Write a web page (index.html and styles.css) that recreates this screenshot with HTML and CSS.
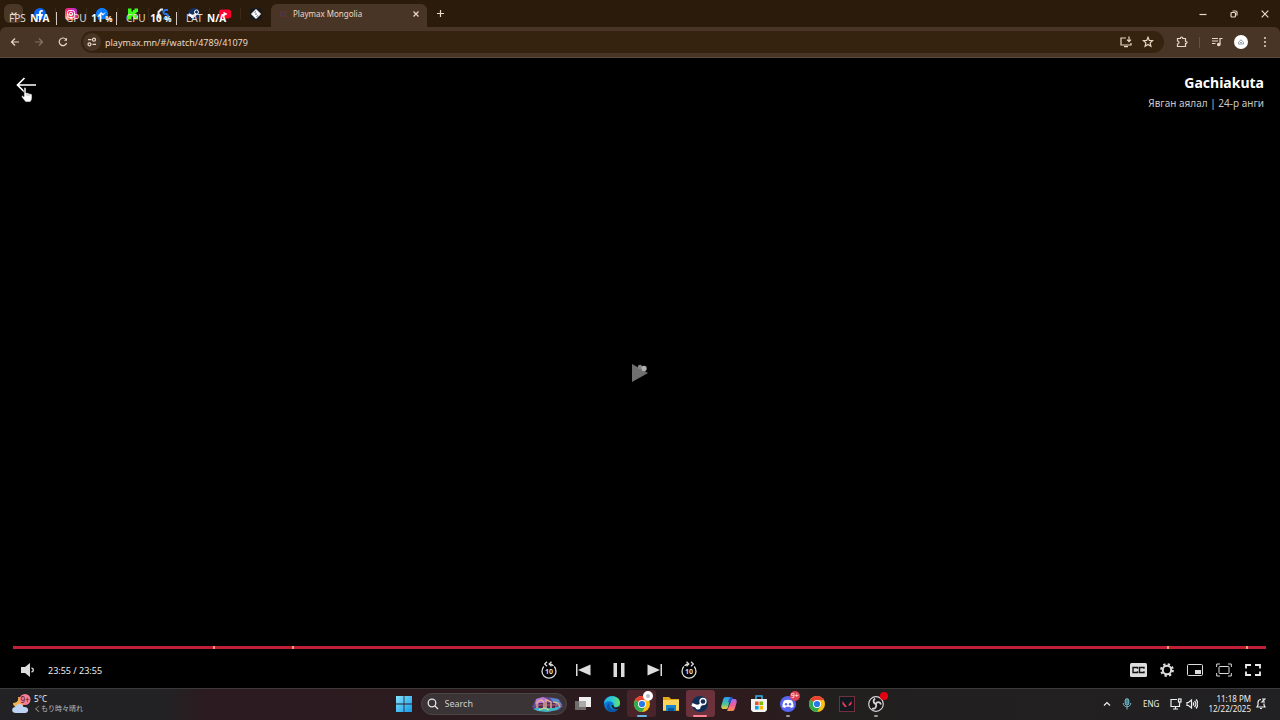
FILE: index.html
```html
<!DOCTYPE html>
<html lang="mn">
<head>
    <meta charset="UTF-8">
    <meta name="viewport" content="width=device-width, initial-scale=1.0">
    <title>Playmax Mongolia</title>
    <link rel="stylesheet" href="styles.css">
</head>
<body>
    <header class="browser">
        <div class="tab-strip">
            <button class="tab-search" aria-label="Search tabs">
                <svg width="8" height="8" viewBox="0 0 8 8" class="line"><path d="M1.500 2.500L4 5l2.500-2.500"/></svg>
            </button>
            <div class="pinned">
                <button class="pin" aria-label="Facebook">
                    <svg width="12" height="12" viewBox="0 0 24 24"><circle cx="12" cy="12" r="12" fill="#0866ff"/><path d="M10 24v-8H7v-4h3v-2c0-4 2-6 5.500-6l2 .2v3.500H16c-1.500 0-2 .8-2 2V12h3.600l-.7 4H14v8z" fill="#fff"/></svg>
                </button>
                <button class="pin" aria-label="Instagram">
                    <svg width="12" height="12" viewBox="0 0 24 24"><defs><linearGradient id="insta" x1="0" y1="1" x2="1" y2="0"><stop offset="0" stop-color="#ffc53d"/><stop offset=".45" stop-color="#ff2870"/><stop offset="1" stop-color="#a52be8"/></linearGradient></defs><rect width="24" height="24" rx="6" fill="url(#insta)"/><rect x="5" y="5" width="14" height="14" rx="4" fill="none" stroke="#fff" stroke-width="2"/><circle cx="12" cy="12" r="3.500" fill="none" stroke="#fff" stroke-width="2"/></svg>
                </button>
                <button class="pin" aria-label="Messenger">
                    <svg width="12" height="12" viewBox="0 0 24 24"><path d="M12 0C5 0 0 5 0 11.500 0 15 1.500 18 4 20v4l4-2 4 .7c7 0 12-4.700 12-11.200S19 0 12 0z" fill="#0a7cff"/><path d="M4 15l6-7 4 3.500L20 8l-6 7-4-3.500z" fill="#fff"/></svg>
                </button>
                <button class="pin" aria-label="Kick">
                    <svg width="12" height="12" viewBox="0 0 24 24"><path d="M2 1h7v6h3V4h3V1h7v7h-3v3h-3v2h3v3h3v7h-7v-3h-3v-3H9v6H2z" fill="#3cff16"/></svg>
                </button>
                <button class="pin" aria-label="Bookmark">
                    <svg width="12" height="12" viewBox="0 0 24 24" fill="none" stroke-width="4"><path d="M12 3H8L3 8v9l4 4" stroke="#e9edf5"/><path d="M22 4h-6l-3 3v3l3 2h3l3 3v3l-3 3h-7" stroke="#2875e7"/></svg>
                </button>
                <button class="pin" aria-label="Steam">
                    <svg width="12" height="12" viewBox="0 0 24 24"><circle cx="12" cy="12" r="12" fill="#123064"/><path d="M1 13l9 4 7-6" stroke="#fff" stroke-width="5" fill="none"/><circle cx="17" cy="8" r="4" fill="#123064" stroke="#fff" stroke-width="2"/><circle cx="9" cy="17" r="3.500" fill="#fff"/></svg>
                </button>
                <button class="pin" aria-label="YouTube">
                    <svg width="12" height="12" viewBox="0 0 24 24"><rect y="3" width="24" height="18" rx="5" fill="#ff0033"/><path d="M9 7.500l8 4.500-8 4.500z" fill="#fff"/></svg>
                </button>
                <button class="pin" aria-label="Games">
                    <svg width="12" height="12" viewBox="0 0 24 24"><rect width="24" height="24" rx="6" fill="#191a20"/><path d="M12 3l9 9-9 9-9-9z" fill="#fff" stroke="#fff" stroke-width="2" stroke-linejoin="round"/><path d="M9 9l3-2M13 17l3-2M10 12h4" stroke="#34343b" stroke-width="1.500"/></svg>
                </button>
            </div>
            <div class="tab">
                <svg width="8" height="8" viewBox="0 0 8 8"><path d="M1 1h6v6H1z" fill="#5c3130"/><path d="M3 2l3 2-3 2z" fill="#30394c"/></svg>
                <span class="tab-title">Playmax Mongolia</span>
                <button class="tab-close" aria-label="Close tab"><svg width="8" height="8" viewBox="0 0 8 8" class="line"><path d="M1.500 1.500l5 5M6.500 1.500l-5 5"/></svg></button>
            </div>
            <button class="new-tab" aria-label="New tab"><svg width="9" height="9" viewBox="0 0 9 9" class="line"><path d="M4.500 1v7M1 4.500h7"/></svg></button>
            <div class="window-controls">
                <button aria-label="Minimize"><svg width="8" height="8" viewBox="0 0 8 8" class="line"><path d="M.5 4.500h7"/></svg></button>
                <button aria-label="Restore"><svg width="8" height="8" viewBox="0 0 8 8" class="line"><rect x="1" y="2.500" width="4.500" height="4.500" rx="1"/><path d="M2.500 1h3.200C6.500 1 7 1.500 7 2.300v3.200"/></svg></button>
                <button aria-label="Close"><svg width="8" height="8" viewBox="0 0 8 8" class="line"><path d="M.7.700l6.600 6.600M7.300.7L.7 7.300"/></svg></button>
            </div>
        </div>

        <div class="toolbar">
            <nav class="nav">
                <button aria-label="Back"><svg width="10" height="10" viewBox="0 0 10 10" class="line"><path d="M9 5H1.500M5 1.500L1.500 5 5 8.500"/></svg></button>
                <button class="dim" aria-label="Forward"><svg width="10" height="10" viewBox="0 0 10 10" class="line"><path d="M1 5h7.500M5 1.500L8.500 5 5 8.500"/></svg></button>
                <button aria-label="Reload"><svg width="10" height="10" viewBox="0 0 10 10" class="line"><path d="M8.600 6A3.800 3.800 0 1 1 8 2.500"/><path d="M9 .8v3H6z" fill="currentColor" stroke="none"/></svg></button>
            </nav>
            <div class="address">
                <button class="site-info" aria-label="Site information"><svg width="10" height="10" viewBox="0 0 10 10" class="line"><path d="M1 2.700h3.500M5.500 7.300H9"/><circle cx="7" cy="2.700" r="1.500"/><circle cx="2.500" cy="7.300" r="1.500"/></svg></button>
                <input class="url" type="text" aria-label="Address" value="playmax.mn/#/watch/4789/41079">
                <button aria-label="Install app"><svg width="12" height="12" viewBox="0 0 12 12" class="line"><path d="M6 2H1v7h10V7M4 10.700h4M9 .5v5M7 3.700l2 2 2-2"/></svg></button>
                <button aria-label="Bookmark this tab"><svg width="12" height="12" viewBox="0 0 12 12" class="line"><path d="M6 1.300l1.300 3.100 3.300.3-2.500 2.200.8 3.300L6 8.500l-2.900 1.700.8-3.300-2.500-2.200 3.300-.3z"/></svg></button>
            </div>
            <div class="extensions">
                <button aria-label="Extensions"><svg width="12" height="12" viewBox="0 0 12 12" class="line"><path d="M1.500 2.500h3C4.300.5 7 .5 6.800 2.500h2.700v3c2-.2 2 2.200 0 2v3h-8V8c2 0 2-3 0-3z"/></svg></button>
                <span class="divider"></span>
                <button aria-label="Media controls"><svg width="12" height="12" viewBox="0 0 12 12" class="line"><path d="M1 2.500h6M1 5h6M1 7.500h3.500M9 8.500v-6h2.500"/><circle cx="7.800" cy="8.500" r="1.200" fill="currentColor"/></svg></button>
                <button aria-label="Profile"><svg width="14" height="14" viewBox="0 0 14 14"><circle cx="7" cy="7" r="7" fill="#fff"/><path d="M4.500 9V7.200L7 4.800l2.500 2.400V9zM6 7.500h2" fill="none" stroke="#989ba2"/></svg></button>
                <button aria-label="Menu"><svg width="12" height="12" viewBox="0 0 12 12" fill="currentColor"><circle cx="6" cy="2" r="1"/><circle cx="6" cy="6" r="1"/><circle cx="6" cy="10" r="1"/></svg></button>
            </div>
        </div>
    </header>

    <!-- performance counters float above the tabs -->
    <div class="stats">
        <div class="stat">FPS <b>N/A</b></div>
        <div class="stat">GPU <b>11 <small>%</small></b></div>
        <div class="stat">CPU <b>10 <small>%</small></b></div>
        <div class="stat">LAT <b>N/A</b></div>
    </div>

    <main class="player">
        <div class="player-top">
            <button class="back" aria-label="Back">
                <svg width="20" height="16" viewBox="0 0 20 16" fill="none" stroke="#fff" stroke-width="1.700"><path d="M20 8H1.500M8.500 1L1.500 8l7 7"/></svg>
                <svg class="pointer" width="12" height="16" viewBox="0 0 12 16"><path d="M3 1.500c0-1.500 2-1.500 2 0V6l1-.5 1 .8 1-.3 1 .9 1-.2 1 1V12L9.500 15h-5L1 10.500c-1-1.500.3-2.500 1.300-1.500l.7.700z" fill="#fff" stroke="#111" stroke-width=".6"/><path d="M6 7v2M8 7v2" stroke="#777" stroke-width=".5"/></svg>
            </button>
            <div class="heading">
                <h1>Gachiakuta</h1>
                <p>Явган аялал | 24-р анги</p>
            </div>
        </div>

        <button class="big-play" aria-label="Play">
            <svg width="16" height="20" viewBox="0 0 16 20"><path d="M0 1l16 9-16 9z" fill="#6f6f6f"/><circle cx="8" cy="4" r="2.200" fill="#858585"/><circle cx="12" cy="5.500" r="2.700" fill="#b0b0b0"/></svg>
        </button>

        <div class="player-bottom">
            <div class="seek">
                <input type="range" min="0" max="1435" value="1435" aria-label="Seek">
                <span class="mark" style="left: 16%"></span>
                <span class="mark" style="left: 22.300%"></span>
                <span class="mark" style="left: 92.100%"></span>
                <span class="mark" style="left: 98.400%"></span>
            </div>
            <div class="controls">
                <div class="controls-left">
                    <button aria-label="Mute"><svg width="14" height="14" viewBox="0 0 14 14"><path d="M0 4h4l5-4v14l-5-4H0z" fill="#ddd"/><path d="M10.500 5c2.500.7 2.500 3.300 0 4" fill="none" stroke="#ddd" stroke-width="1.300"/></svg></button>
                    <span class="time">23:55 / 23:55</span>
                </div>
                <div class="controls-center">
                    <button aria-label="Back 10 seconds"><svg width="16" height="18" viewBox="0 0 16 18" fill="none" stroke="#ddd" stroke-width="1.300"><path d="M2.800 5.500a7 7 0 1 0 10.400 0M8 3c2 0 3.500.6 4.500 1.800"/><path d="M6 .7L3.700 3 6 5.300M10.500.7L8.200 3l2.300 2.300"/><text x="8" y="13" class="ten">10</text></svg></button>
                    <button aria-label="Previous episode"><svg width="16" height="12" viewBox="0 0 16 12" fill="#ddd"><path d="M1 0h1.500v12H1zM15.500.5v11L3 6z"/></svg></button>
                    <button aria-label="Pause"><svg width="20" height="14" viewBox="0 0 20 14" fill="#ddd"><path d="M4.500 0H8v14H4.500zM12 0h3.500v14H12z"/></svg></button>
                    <button aria-label="Next episode"><svg width="16" height="12" viewBox="0 0 16 12" fill="#ddd"><path d="M13.500 0H15v12h-1.500zM.5.500v11L13 6z"/></svg></button>
                    <button aria-label="Forward 10 seconds"><svg width="16" height="18" viewBox="0 0 16 18" fill="none" stroke="#ddd" stroke-width="1.300"><path d="M2.800 5.500a7 7 0 1 0 10.400 0M8 3c-2 0-3.500.6-4.500 1.800"/><path d="M5.500.7L7.800 3 5.500 5.300M10 .7L12.300 3 10 5.300"/><text x="8" y="13" class="ten">10</text></svg></button>
                </div>
                <div class="controls-right">
                    <button aria-label="Subtitles"><svg width="17" height="14" viewBox="0 0 17 14"><rect width="17" height="14" rx="1.500" fill="#ddd"/><path d="M7.500 5.800V4.500H3v5h4.500V8.200M14 5.800V4.500H9.500v5H14V8.200" fill="none" stroke="#111" stroke-width="1.400"/></svg></button>
                    <button aria-label="Settings"><svg width="14" height="14" viewBox="0 0 14 14" fill="none" stroke="#ddd"><circle cx="7" cy="7" r="4.200" stroke-width="2"/><circle cx="7" cy="7" r="5.800" stroke-width="2.200" stroke-dasharray="2.280 2.280"/></svg></button>
                    <button aria-label="Picture in picture"><svg width="16" height="12" viewBox="0 0 16 12"><rect x=".5" y=".5" width="15" height="11" rx="1" fill="none" stroke="#ddd"/><path d="M8 6h6v4H8z" fill="#ddd"/></svg></button>
                    <button aria-label="Theater mode"><svg width="16" height="14" viewBox="0 0 16 14" fill="none" stroke="#ddd"><rect x="3" y="3.500" width="10" height="7" rx="1"/><path d="M.7 4V1H4M12 1h3.300v3M15.300 10v3H12M4 13H.7v-3"/></svg></button>
                    <button aria-label="Full screen"><svg width="16" height="12" viewBox="0 0 16 12" fill="none" stroke="#eee" stroke-width="1.800"><path d="M1 4.500V1h5M10 1h5v3.500M15 7.500V11h-5M6 11H1V7.500"/></svg></button>
                </div>
            </div>
        </div>
    </main>

    <footer class="taskbar">
        <button class="weather">
            <svg width="20" height="20" viewBox="0 0 20 20"><path d="M6 3c1 3-1 6-5 6 0 6 11 7 11-1 0-3-3-5-6-5z" fill="#f2b24c"/><circle cx="13" cy="5.500" r="5.500" fill="#f77f91"/><text x="13" y="8.500" class="badge-text">9+</text><path d="M4 19c-5 0-5-6-.5-6 1-4 7-4 8 0 6-1 6 6 1.500 6z" fill="#bed3f4"/></svg>
            <span class="weather-text"><span>5°C</span><span class="dim-text">くもり時々晴れ</span></span>
        </button>

        <div class="dock">
            <button class="start" aria-label="Start"><svg width="16" height="16" viewBox="0 0 16 16"><defs><linearGradient id="win" x1="0" y1="0" x2="1" y2="1"><stop stop-color="#83e3ff"/><stop offset="1" stop-color="#139bea"/></linearGradient></defs><path d="M0 0h7.600v7.600H0zM8.400 0H16v7.600H8.400zM0 8.400h7.600V16H0zM8.400 8.400H16V16H8.400z" fill="url(#win)"/></svg></button>
            <div class="search">
                <svg width="12" height="12" viewBox="0 0 12 12" fill="none" stroke="#e5e5e5" stroke-width="1.300"><circle cx="5" cy="5" r="3.800"/><path d="M8 8l3 3"/></svg>
                <input type="text" placeholder="Search" aria-label="Search">
                <svg width="32" height="16" viewBox="0 0 32 16"><path d="M0 11L4 3l7-2 9 .5 7 1.500 4 7-4 4-9 1.500L5 15z" fill="#654891"/><path d="M4 3l7-2 6 3-6 3-8 1z" fill="#b879d2"/><path d="M18 2l8 1 4 6-7-1z" fill="#558bc9"/><path d="M1 13l8-2 10 1 11-2-5 4-10 2-9-1z" fill="#41b7c5"/><path d="M5 12V6l4-2 3 2v6M14 12V4l5 2v6M22 12V6l4 1 2 4" fill="none" stroke="#f0b58b" stroke-width="1.200"/><path d="M7 7h4v5H7zM15 7h3v5h-3zM20 7h3v5h-3z" fill="#5b2748"/><path d="M3 9h26" stroke="#c98a8e" stroke-width=".7"/><path d="M7 14l5-2 5 2" stroke="#e8df74" fill="none"/></svg>
            </div>
            <div class="apps">
                <button aria-label="Task view"><svg width="18" height="16" viewBox="0 0 18 16"><path d="M5 1h12v10H5z" fill="#eee"/><path d="M1 5h11v9H1z" fill="#777" opacity=".9"/><path d="M5 5h7v6H5z" fill="#aaa"/></svg></button>
                <button aria-label="Edge"><svg width="18" height="18" viewBox="0 0 18 18"><defs><linearGradient id="edge"><stop stop-color="#23aef1"/><stop offset=".6" stop-color="#31ceca"/><stop offset="1" stop-color="#69e657"/></linearGradient></defs><circle cx="9" cy="9" r="8" fill="#0d78d1"/><path d="M1 9C1-1 17-1 17 8c0 5-7 5-6.500 2.500C12 7 5 4 1 9z" fill="url(#edge)"/><path d="M7 8c-2 4 1 8 8 6-3 4-9 4-11 0-1-2 0-5 3-6z" fill="#0856a2"/><path d="M10.500 10c-.5 3 4 3 6 1l-1 3c-4 1-7-1-7-4z" fill="#242025"/></svg></button>
                <button class="app open" aria-label="Chrome"><svg width="18" height="18" viewBox="0 0 18 18"><circle cx="9" cy="9" r="8" fill="#fbc116"/><path d="M9 9L2.100 5A8 8 0 0 1 15.900 5H9z" fill="#e94235"/><path d="M9 9L2.100 5A8 8 0 0 0 9 17l3.500-6z" fill="#31a852"/><circle cx="9" cy="9" r="4" fill="#fff"/><circle cx="9" cy="9" r="3.100" fill="#2878e8"/></svg><span class="badge avatar"></span></button>
                <button aria-label="File Explorer"><svg width="18" height="16" viewBox="0 0 18 16"><path d="M1 1h6l2 2h8v12H1z" fill="#e6a719"/><path d="M1 4h16v10H1z" fill="#ffd35a"/><path d="M4 9h10v6H4z" fill="#1684cf"/><path d="M6 12h6v3H6z" fill="#07599c"/></svg></button>
                <button class="app active" aria-label="Steam"><svg width="18" height="18" viewBox="0 0 18 18"><circle cx="9" cy="9" r="8" fill="#102e55"/><path d="M1 9.500l6 2.500 4.500-4" stroke="#fff" stroke-width="3" fill="none"/><circle cx="12" cy="6.500" r="3" fill="#102e55" stroke="#fff" stroke-width="1.300"/><circle cx="7" cy="12" r="2.500" fill="#fff"/></svg></button>
                <button aria-label="Copilot"><svg width="18" height="18" viewBox="0 0 18 18"><defs><linearGradient id="cop" x1="0" y1="0" x2="0" y2="1"><stop stop-color="#299cf1"/><stop offset=".6" stop-color="#4cc49a"/><stop offset="1" stop-color="#f5cb3d"/></linearGradient><linearGradient id="pil" x1="0" y1="0" x2="0" y2="1"><stop stop-color="#a66bed"/><stop offset=".5" stop-color="#ee5b9a"/><stop offset="1" stop-color="#ff8f50"/></linearGradient></defs><path d="M6 2h5L8 12c-.5 2-1 2-3 2H4c-3 0-3-2-2.500-4L3 5c.5-2 1-3 3-3z" fill="url(#cop)"/><path d="M13 4h1c3 0 3 2 2.500 4L15 13c-.5 2-1 3-3 3H7l4-10c.5-2 1-2 2-2z" fill="url(#pil)"/><path d="M10 2h2l1 2c-2 0-2 2-2.500 4L8 7z" fill="#2458ce"/></svg></button>
                <button aria-label="Microsoft Store"><svg width="18" height="18" viewBox="0 0 18 18"><path d="M6 4V1h6v3" fill="none" stroke="#36b3ed" stroke-width="1.500"/><path d="M1 4h16v11l-2 2H3l-2-2z" fill="#f3f3f3"/><path d="M5 6.500h3.600v3.600H5z" fill="#f25022"/><path d="M9.400 6.500H13v3.600H9.400z" fill="#7fba00"/><path d="M5 10.900h3.600v3.600H5z" fill="#00a4ef"/><path d="M9.400 10.900H13v3.600H9.400z" fill="#ffb900"/></svg></button>
                <button class="app running" aria-label="Discord"><svg width="18" height="18" viewBox="0 0 18 18"><circle cx="9" cy="9" r="8" fill="#5865f2"/><path d="M5 5.500c3-1 5-1 8 0 1 2 1.700 4 1.500 6.500L12 13l-1-1.300H7L6 13l-2.500-1C3.300 9.500 4 7.500 5 5.500z" fill="#fff"/><circle cx="7" cy="9.300" r="1.200" fill="#5865f2"/><circle cx="11" cy="9.300" r="1.200" fill="#5865f2"/></svg><span class="badge count">9+</span></button>
                <button aria-label="Chrome"><svg width="18" height="18" viewBox="0 0 18 18"><circle cx="9" cy="9" r="8" fill="#fbc116"/><path d="M9 9L2.100 5A8 8 0 0 1 15.900 5H9z" fill="#e94235"/><path d="M9 9L2.100 5A8 8 0 0 0 9 17l3.500-6z" fill="#31a852"/><circle cx="9" cy="9" r="4" fill="#fff"/><circle cx="9" cy="9" r="3.100" fill="#2878e8"/></svg></button>
                <button aria-label="Valorant"><svg width="16" height="16" viewBox="0 0 16 16"><rect x=".5" y=".5" width="15" height="15" fill="#111820" stroke="#74303a"/><path d="M3.500 5l4.500 6H5.800L3.500 8zM12.500 5L9 9.600h2.200L12.500 8z" fill="#f13e50"/></svg></button>
                <button class="app running" aria-label="OBS Studio"><svg width="18" height="18" viewBox="0 0 18 18" fill="none" stroke="#d6d6d6"><circle cx="9" cy="9" r="7.300" fill="#18181a" stroke-width="1.200"/><path d="M8 3.500c-2.500 2-1.500 5 1 5.500M14 9.500c-1-3-4-3-5-.5M5 13.500c3 1 5-1.500 4-4.500" stroke-width="1.800"/></svg><span class="badge rec"></span></button>
            </div>
        </div>

        <div class="tray">
            <button aria-label="Hidden icons"><svg width="8" height="8" viewBox="0 0 8 8" class="line"><path d="M1 5.500l3-3 3 3"/></svg></button>
            <button aria-label="Microphone"><svg width="10" height="12" viewBox="0 0 10 12" fill="none" stroke="#78b9c7"><rect x="3.200" y=".7" width="3.600" height="6.500" rx="1.800" fill="#478594"/><path d="M1.200 5c0 5 7.600 5 7.600 0M5 9v2.500"/></svg></button>
            <button class="lang">ENG</button>
            <button class="quick" aria-label="Network and volume">
                <svg width="12" height="12" viewBox="0 0 12 12" class="line"><path d="M7 1.500H1v7h8.500V6M3 11h5M5.500 8.500V11"/><rect x="8.500" y="1" width="2.500" height="3"/><path d="M9.700 4v2"/></svg>
                <svg width="12" height="12" viewBox="0 0 12 12" class="line"><path d="M1 4.500h1.500l3-2.500v8l-3-2.500H1zM7 4.500c1 1 1 2 0 3M8.500 3c2 2 2 4 0 6M10 1.500c2.500 2.500 2.500 6.500 0 9"/></svg>
            </button>
            <button class="clock"><span>11:18 PM</span><span>12/22/2025</span></button>
            <button aria-label="Notifications"><svg width="10" height="12" viewBox="0 0 10 12" class="line"><path d="M5 1.500c-2 0-3 1.300-3 3V7L1 9h8L8 7V5.500M4 10.500h2M6 1h3L6 4h3"/></svg></button>
        </div>
    </footer>
</body>
</html>
```

FILE: styles.css
```css
* {
    box-sizing: border-box;
}

body {
    margin: 0;
    min-height: 100vh;
    display: flex;
    flex-direction: column;
    background: #000;
    color: #eee;
    font-family: "Noto Sans", "Noto Sans CJK JP", sans-serif;
    font-size: 10px;
}

button {
    display: flex;
    align-items: center;
    justify-content: center;
    padding: 0;
    border: none;
    background: none;
    color: inherit;
    font: inherit;
    cursor: pointer;
}

input {
    min-width: 0;
    padding: 0;
    border: none;
    outline: none;
    background: none;
    color: inherit;
    font: inherit;
}

svg {
    display: block;
    flex-shrink: 0;
}

.line {
    fill: none;
    stroke: currentColor;
    stroke-width: 1.2;
}

/* browser */
.browser {
    background: #2a1b0b;
    color: #ead8c5;
}

.tab-strip {
    display: flex;
    align-items: center;
    height: 27px;
    padding-left: 4px;
}

.tab-search {
    width: 19px;
    height: 19px;
    margin-right: 2px;
    border-radius: 6px;
    background: #4a3726;
}

.pinned {
    display: flex;
    width: 246px;
}

.pin {
    flex: 1;
    height: 12px;
    border-right: 1px solid #3b2918;
}

.pin:last-child {
    border-right: none;
}

.tab {
    align-self: flex-end;
    display: flex;
    align-items: center;
    gap: 6px;
    width: 156px;
    height: 23px;
    padding: 0 6px 4px 8px;
    border-radius: 6px 6px 0 0;
    background: #493525;
}

.tab-title {
    flex: 1;
    font-size: 8px;
}

.tab-close {
    width: 10px;
    height: 10px;
}

.new-tab {
    width: 26px;
    height: 20px;
}

.window-controls {
    display: flex;
    margin-left: auto;
}

.window-controls button {
    width: 31px;
    height: 26px;
}

.toolbar {
    display: flex;
    align-items: center;
    height: 31px;
    padding: 0 9px 0 3px;
    border-bottom: 1px solid #5b4b3e;
    border-radius: 6px 6px 0 0;
    background: #493525;
}

.nav {
    display: flex;
}

.nav button {
    width: 24px;
    height: 24px;
}

.dim {
    color: #88725f;
}

.address {
    flex: 1;
    display: flex;
    align-items: center;
    gap: 10px;
    height: 22px;
    margin-left: 6px;
    padding: 0 10px 0 2px;
    border-radius: 11px;
    background: #35230f;
}

.site-info {
    width: 18px;
    height: 18px;
    margin-right: -6px;
    border-radius: 9px;
    background: #493525;
}

.url {
    flex: 1;
    font-size: 9px;
}

.extensions {
    display: flex;
    align-items: center;
    gap: 11px;
    margin-left: 12px;
}

.divider {
    width: 1px;
    height: 11px;
    background: #6d5038;
}

.stats {
    position: absolute;
    top: 12px;
    left: 0;
    display: flex;
    color: #e4dbd2;
    line-height: 13px;
}

.stat {
    width: 60px;
    padding-left: 9px;
    border-right: 1px solid #d3cbc3;
    white-space: nowrap;
}

.stat:first-child {
    width: 57px;
}

.stat:last-child {
    border-right: none;
}

.stat b {
    margin-left: 2px;
    color: #fff;
}

.stat small {
    font-size: 8px;
}

/* player */
.player {
    flex: 1;
    display: flex;
    flex-direction: column;
    justify-content: space-between;
    position: relative;
    background: #000;
}

.player-top {
    display: flex;
    justify-content: space-between;
    align-items: flex-start;
    padding: 14px 16px;
}

.back {
    position: relative;
    margin-top: 5px;
}

.pointer {
    position: absolute;
    top: 10px;
    left: 5px;
}

.heading {
    text-align: right;
}

.heading h1 {
    margin: 0;
    color: #fff;
    font-size: 14px;
    line-height: 21px;
}

.heading p {
    margin: 0;
    color: #c9c9c9;
    line-height: 20px;
}

.big-play {
    position: absolute;
    top: 50%;
    left: 50%;
    transform: translate(-50%, -50%);
}

.seek {
    position: relative;
    height: 3px;
    margin: 0 14px 0 13px;
}

.seek input {
    display: block;
    width: 100%;
    height: 3px;
    margin: 0;
    appearance: none;
    background: #c01f35;
}

.seek input::-webkit-slider-thumb {
    appearance: none;
    width: 1px;
    height: 3px;
}

.mark {
    position: absolute;
    top: 0;
    width: 2px;
    height: 3px;
    background: #f0a070;
}

.controls {
    display: flex;
    align-items: center;
    justify-content: space-between;
    height: 39px;
    padding: 3px 19px 0 21px;
}

.controls-left,
.controls-center,
.controls-right {
    display: flex;
    align-items: center;
}

.controls-left {
    gap: 13px;
    min-width: 86px;
}

.time {
    font-size: 9px;
}

.controls-center {
    gap: 18px;
}

.controls-right {
    gap: 13px;
}

.ten {
    fill: #ddd;
    stroke: none;
    font-size: 7px;
    font-weight: bold;
    text-anchor: middle;
}

/* taskbar */
.taskbar {
    display: grid;
    grid-template-columns: 1fr auto 1fr;
    align-items: center;
    height: 32px;
    padding-bottom: 2px;
    border-top: 1px solid #3c3939;
    background: linear-gradient(90deg, #222224 0, #222224 13%, #2c1b20 16%, #2b1a1e 50%, #2e1b1d 58%, #221f1f 65%, #212022 100%);
}

.weather {
    justify-self: start;
    gap: 2px;
    margin-left: 12px;
    font-size: 8px;
    line-height: 10px;
}

.weather-text {
    display: flex;
    flex-direction: column;
    align-items: flex-start;
}

.dim-text {
    color: #bbb;
    font-size: 7px;
}

.badge-text {
    fill: #4d1720;
    font-size: 8px;
    text-anchor: middle;
}

.dock {
    display: flex;
    align-items: center;
    gap: 2px;
}

.start {
    width: 29px;
    height: 28px;
}

.search {
    display: flex;
    align-items: center;
    gap: 6px;
    width: 146px;
    height: 22px;
    padding: 0 2px 0 5px;
    border: 1px solid #4c4547;
    border-radius: 11px;
    background: #3b3437;
}

.search input {
    flex: 1;
    font-size: 9px;
}

.search input::placeholder {
    color: #ccc;
    opacity: 1;
}

.apps {
    display: grid;
    grid-template-columns: repeat(11, 1fr);
    width: 322px;
}

.apps button {
    position: relative;
    height: 27px;
    border-radius: 3px;
}

.app::after {
    content: "";
    position: absolute;
    bottom: 0;
    left: 50%;
    width: 4px;
    height: 2px;
    margin-left: -2px;
    border-radius: 1px;
    background: #999;
}

.apps .open {
    background: #49242b;
}

.open::after {
    width: 10px;
    margin-left: -5px;
    background: #63b6e8;
}

.apps .active {
    background: #6b323b;
}

.active::after {
    width: 14px;
    margin-left: -7px;
    background: #ff8290;
}

.badge {
    position: absolute;
    top: 1px;
    right: 3px;
    width: 10px;
    height: 10px;
    border-radius: 5px;
}

.avatar {
    border: 3px solid #fff;
    background: #b9bbc2;
}

.count {
    background: #df4152;
    color: #fff;
    font-size: 7px;
    line-height: 10px;
}

.rec {
    top: 2px;
    width: 8px;
    height: 8px;
    background: #e60012;
}

.tray {
    justify-self: end;
    display: flex;
    align-items: center;
    gap: 11px;
    margin-right: 14px;
}

.lang {
    font-size: 8px;
}

.quick {
    gap: 4px;
    margin-right: -1px;
}

.clock {
    flex-direction: column;
    align-items: flex-end;
    margin-right: -6px;
    font-size: 8px;
    line-height: 10px;
}
```
